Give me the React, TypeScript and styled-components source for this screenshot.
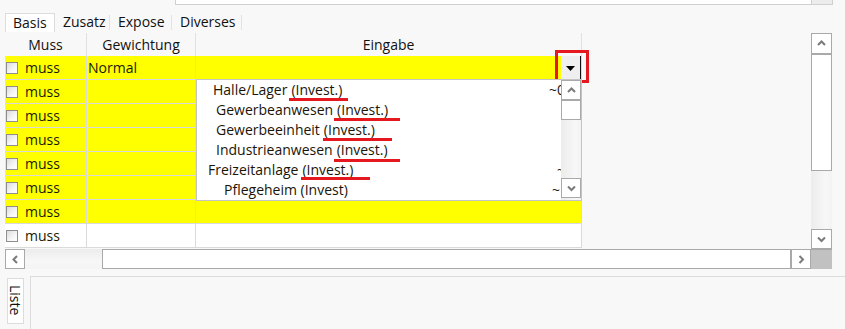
import React from 'react';
import styled, { createGlobalStyle } from 'styled-components';

const GlobalStyle = createGlobalStyle`
  html, body { margin: 0; padding: 0; background: #f8f8f8; }
  body { font-family: "Open Sans", "Noto Sans", sans-serif; }
  *, *::before, *::after { box-sizing: border-box; }
`;

const Root = styled.div`
  width: 845px;
  height: 329px;
  overflow: hidden;
  background: #f8f8f8;
  color: #151515;
  font-size: 14px;
  display: flex;
  flex-direction: column;
`;

const TopBar = styled.div`
  height: 13px;
  display: flex;
  align-items: flex-start;
  padding-left: 175px;
`;

const TopInput = styled.div`
  width: 637px;
  height: 5px;
  background: #fff;
  border: 1px solid #d0d0d0;
  border-top: none;
`;

const TopButton = styled.div`
  width: 21px;
  height: 5px;
  background: #ececec;
  border: 1px solid #d0d0d0;
  border-top: none;
  border-left: none;
`;

const TabStrip = styled.div`
  height: 20px;
  display: flex;
  padding-left: 5px;
`;

const Tab = styled.div<{ $w: number; $active?: boolean }>`
  width: ${(p) => p.$w}px;
  height: 19px;
  padding-left: ${(p) => (p.$active ? 7 : 8)}px;
  font-size: 14px;
  line-height: 18px;
  color: #111;
  position: relative;
  background: ${(p) => (p.$active ? '#fff' : 'transparent')};
  border: ${(p) => (p.$active ? '1px solid #dcdcdc' : 'none')};
  border-bottom: none;
  &::after {
    content: '';
    display: ${(p) => (p.$active ? 'none' : 'block')};
    position: absolute;
    right: 0;
    top: 2px;
    bottom: 2px;
    width: 1px;
    background: #e2e2e2;
  }
`;

const Main = styled.div`
  margin-left: 5px;
  display: grid;
  grid-template-columns: 806px 21px;
  grid-template-rows: 216px 20px;
`;

const GridPanel = styled.div`
  position: relative;
  overflow: hidden;
`;

const HeaderRow = styled.div`
  display: flex;
  height: 23px;
`;

const HeaderCell = styled.div<{ $w: number }>`
  width: ${(p) => p.$w}px;
  border-right: 1px solid #e0e0e0;
  text-align: center;
  line-height: 22px;
  padding-top: 1px;
  color: #111;
`;

const Row = styled.div`
  display: flex;
  height: 24px;
  width: 577px;
`;

const Cell = styled.div<{ $w: number; $bg: string }>`
  width: ${(p) => p.$w}px;
  height: 24px;
  background: ${(p) => p.$bg};
  border-right: 1px solid #dadada;
  border-bottom: 1px solid #dadada;
  display: flex;
  align-items: center;
  position: relative;
  line-height: 22px;
`;

const Check = styled.span`
  width: 12px;
  height: 12px;
  margin-left: 1px;
  margin-right: 7px;
  border: 1px solid #8e8e8e;
  background: linear-gradient(135deg, #dcdcdc 0%, #f6f6f6 60%, #ffffff 100%);
  flex: none;
`;

const CellText = styled.span<{ $pad?: number }>`
  padding-left: ${(p) => p.$pad ?? 0}px;
  color: #181a00;
`;

const DropButton = styled.div`
  position: absolute;
  right: 0;
  top: 0;
  width: 20px;
  height: 23px;
  background: #efefef;
  border-right: 1px solid #111;
  display: flex;
  align-items: center;
  justify-content: center;
  padding-top: 2px;
  &::after {
    content: '';
    position: absolute;
    left: -6px;
    top: -6px;
    width: 34px;
    height: 33px;
    border: 3px solid #e5171f;
  }
`;

const Popup = styled.div`
  position: absolute;
  left: 191px;
  top: 46px;
  width: 386px;
  height: 122px;
  background: #fff;
  border: 1px solid #c4c4c4;
  display: flex;
`;

const PopupList = styled.div`
  flex: 1;
  overflow: hidden;
`;

const PopupItem = styled.div<{ $indent: number }>`
  height: 20px;
  line-height: 20px;
  padding-left: ${(p) => p.$indent}px;
  display: flex;
  white-space: nowrap;
  color: #1b1408;
`;

const Marked = styled.span<{ $l: number; $r: number; $b: number }>`
  position: relative;
  margin-left: 4px;
  &::after {
    content: '';
    position: absolute;
    left: ${(p) => p.$l}px;
    right: ${(p) => p.$r}px;
    bottom: ${(p) => p.$b}px;
    height: 3px;
    background: #e5171f;
  }
`;

const Tail = styled.span<{ $x: number }>`
  margin-left: auto;
  margin-right: ${(p) => p.$x}px;
`;

const VScroll = styled.div<{ $h: number }>`
  width: ${(p) => (p.$h ? 20 : 21)}px;
  display: flex;
  flex-direction: column;
  background: linear-gradient(90deg, #ececec 0%, #f7f7f7 70%, #f3f3f3 100%);
`;

const SBtn = styled.div<{ $h: number; $w?: number }>`
  height: ${(p) => p.$h}px;
  width: ${(p) => (p.$w ? `${p.$w}px` : 'auto')};
  background: #fff;
  border: 1px solid #a9a9a9;
  display: flex;
  align-items: center;
  justify-content: center;
  flex: none;
`;

const Thumb = styled.div<{ $size: number; $horiz?: boolean }>`
  ${(p) => (p.$horiz ? `width: ${p.$size}px;` : `height: ${p.$size}px;`)}
  background: #fff;
  border: 1px solid #a9a9a9;
  flex: none;
`;

const Track = styled.div<{ $size: number; $horiz?: boolean }>`
  ${(p) => (p.$horiz ? `width: ${p.$size}px;` : `height: ${p.$size}px;`)}
  flex: none;
`;

const HScroll = styled.div`
  display: flex;
  height: 20px;
  background: linear-gradient(180deg, #ececec 0%, #f7f7f7 60%, #f4f4f4 100%);
`;

const Corner = styled.div`
  background: #c1c1c1;
  border-top: 1px solid #a9a9a9;
`;

const Bottom = styled.div`
  display: flex;
  padding-top: 7px;
  padding-left: 7px;
  gap: 6px;
  flex: 1;
`;

const SideTab = styled.div`
  width: 17px;
  height: 46px;
  margin-top: 2px;
  border: 1px solid #dcdcdc;
  background: #fff;
  writing-mode: vertical-rl;
  font-size: 14px;
  line-height: 15px;
  padding-top: 6px;
  color: #111;
`;

const Panel = styled.div`
  flex: 1;
  border: 1px solid #dcdcdc;
  border-right: none;
  border-bottom: none;
  background: #f8f8f8;
`;

const Chevron = ({ dir }: { dir: 'up' | 'down' | 'left' | 'right' }) => {
  const pts: Record<string, string> = {
    up: '1,6 4.5,2.5 8,6',
    down: '1,2.5 4.5,6 8,2.5',
    left: '6,1 2.5,4.5 6,8',
    right: '2.5,1 6,4.5 2.5,8',
  };
  return (
    <svg width="9" height="9" viewBox="0 0 9 9">
      <polyline points={pts[dir]} fill="none" stroke="#7a7a7a" strokeWidth="2" />
    </svg>
  );
};

const DownTriangle = () => (
  <svg width="9" height="5" viewBox="0 0 9 5">
    <polygon points="0,0 9,0 4.5,5" fill="#000" />
  </svg>
);

const YELLOW = '#ffff00';

const items = [
  { label: 'Halle/Lager', indent: 16, mark: { l: -2, r: -6, b: -1 }, tail: '~0', tx: -4 },
  { label: 'Gewerbeanwesen', indent: 19, mark: { l: -3, r: -12, b: -1 }, tail: '', tx: 0 },
  { label: 'Gewerbeeinheit', indent: 19, mark: { l: -1, r: -17, b: -1 }, tail: '', tx: 0 },
  { label: 'Industrieanwesen', indent: 19, mark: { l: -3, r: -12, b: -2 }, tail: '', tx: 0 },
  { label: 'Freizeitanlage', indent: 11, mark: { l: -1, r: -17, b: 0 }, tail: '~', tx: -4 },
  { label: 'Pflegeheim (Invest)', indent: 27, mark: null, tail: '~', tx: 1 },
];

export default function App() {
  const rows = [0, 1, 2, 3, 4, 5, 6, 7];
  return (
    <Root>
      <GlobalStyle />
      <TopBar>
        <TopInput />
        <TopButton />
      </TopBar>
      <TabStrip>
        <Tab $w={50} $active>Basis</Tab>
        <Tab $w={55}>Zusatz</Tab>
        <Tab $w={62}>Expose</Tab>
        <Tab $w={70}>Diverses</Tab>
      </TabStrip>
      <Main>
        <GridPanel>
          <HeaderRow>
            <HeaderCell $w={82}>Muss</HeaderCell>
            <HeaderCell $w={109}>Gewichtung</HeaderCell>
            <HeaderCell $w={386}>Eingabe</HeaderCell>
          </HeaderRow>
          {rows.map((i) => {
            const bg = i < 7 ? YELLOW : '#ffffff';
            return (
              <Row key={i}>
                <Cell $w={82} $bg={bg}>
                  <Check />
                  <CellText>muss</CellText>
                </Cell>
                <Cell $w={109} $bg={bg}>
                  {i === 0 && <CellText $pad={1}>Normal</CellText>}
                </Cell>
                <Cell $w={386} $bg={bg}>
                  {i === 0 && (
                    <DropButton>
                      <DownTriangle />
                    </DropButton>
                  )}
                </Cell>
              </Row>
            );
          })}
          <Popup>
            <PopupList>
              {items.map((it, idx) => (
                <PopupItem key={idx} $indent={it.indent}>
                  <span>{it.label}</span>
                  {it.mark && (
                    <Marked $l={it.mark.l} $r={it.mark.r} $b={it.mark.b}>
                      (Invest.)
                    </Marked>
                  )}
                  {it.tail && <Tail $x={it.tx}>{it.tail}</Tail>}
                </PopupItem>
              ))}
            </PopupList>
            <VScroll $h={1}>
              <SBtn $h={20}>
                <Chevron dir="up" />
              </SBtn>
              <Thumb $size={20} />
              <Track $size={58} />
              <SBtn $h={20}>
                <Chevron dir="down" />
              </SBtn>
            </VScroll>
          </Popup>
        </GridPanel>
        <VScroll $h={0}>
          <SBtn $h={21}>
            <Chevron dir="up" />
          </SBtn>
          <Thumb $size={117} />
          <Track $size={58} />
          <SBtn $h={20}>
            <Chevron dir="down" />
          </SBtn>
        </VScroll>
        <HScroll>
          <SBtn $h={20} $w={20}>
            <Chevron dir="left" />
          </SBtn>
          <Track $size={77} $horiz />
          <Thumb $size={689} $horiz />
          <SBtn $h={20} $w={20}>
            <Chevron dir="right" />
          </SBtn>
        </HScroll>
        <Corner />
      </Main>
      <Bottom>
        <SideTab>Liste</SideTab>
        <Panel />
      </Bottom>
    </Root>
  );
}
